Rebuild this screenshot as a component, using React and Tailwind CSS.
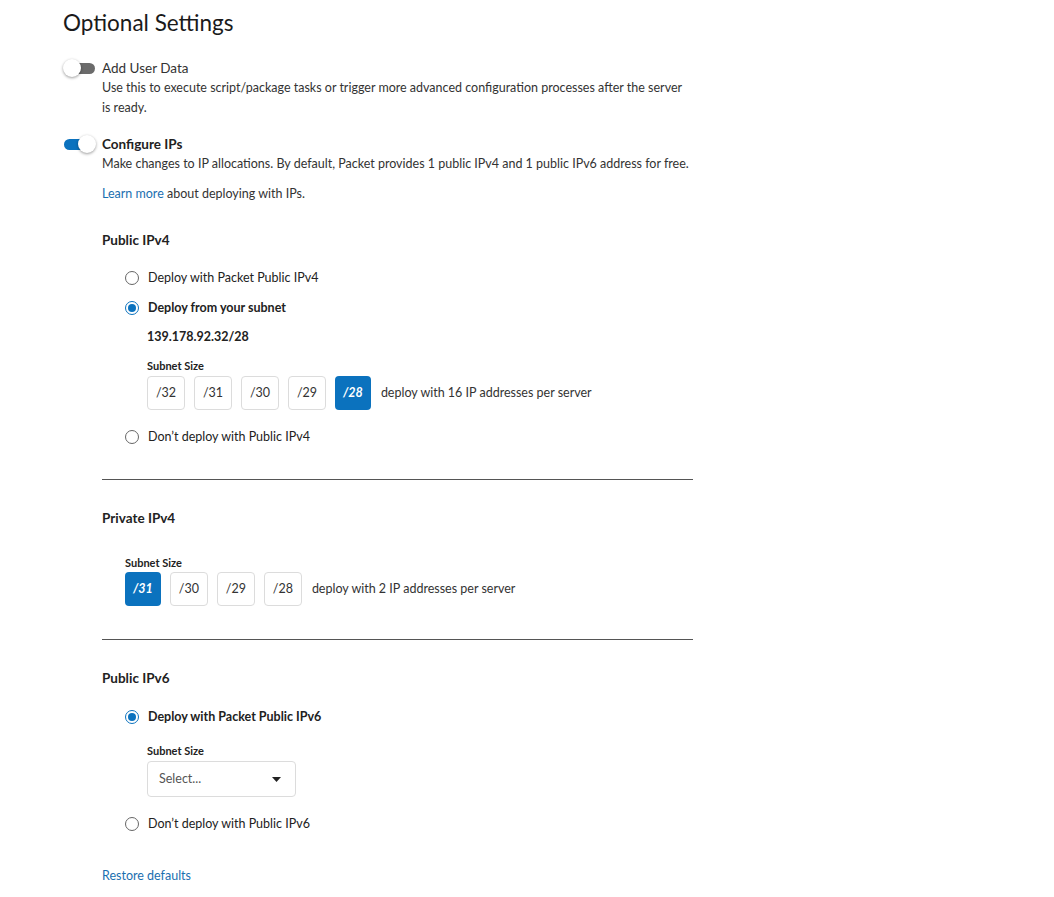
import { useState } from "react";

const BLUE = "bg-[#0b72be]";

function Toggle({ on }) {
  return (
    <div className="relative w-[34px] h-[20px] flex items-center shrink-0">
      <div
        className={`w-[31px] h-[11px] rounded-full ml-[1px] ${on ? "bg-[#0b72be]" : "bg-[#6b6b6b]"}`}
      />
      <div
        className={`absolute top-[1px] w-[18px] h-[18px] rounded-full bg-white shadow-[0_1px_3px_rgba(0,0,0,0.4)] ${on ? "left-[15px]" : "left-0"}`}
      />
    </div>
  );
}

function Radio({ checked, label, bold }) {
  return (
    <div className="flex items-center h-[20px]">
      <div
        className={`w-[14px] h-[14px] rounded-full border flex items-center justify-center bg-white ${checked ? "border-[#0b72be]" : "border-[#666]"}`}
      >
        {checked && <div className="w-[8px] h-[8px] rounded-full bg-[#0b72be]" />}
      </div>
      <span className={`ml-[9px] text-[12.5px] text-[#222] ${bold ? "font-bold" : ""}`}>{label}</span>
    </div>
  );
}

function SizeButtons({ sizes, active, note }) {
  return (
    <div className="flex items-center gap-[9px]">
      {sizes.map((s) => (
        <div
          key={s}
          className={`h-[34px] flex items-center justify-center rounded-[4px] text-[12.5px] ${
            s === active
              ? `${BLUE} px-[8px] text-white font-bold italic`
              : "w-[38px] border border-[#dcdcdc] text-[#333]"
          }`}
        >
          {s}
        </div>
      ))}
      <span className="ml-[1px] text-[12.5px] text-[#333]">{note}</span>
    </div>
  );
}

export default function App() {
  const [userData] = useState(false);
  const [ips] = useState(true);

  return (
    <div className="min-h-[897px] bg-white pl-[63px] pt-[10px] font-['Lato',sans-serif] text-[#222]">
      <h2 className="text-[22.5px] leading-[26px] text-[#1a1a1a]">Optional Settings</h2>

      <div className="mt-[22px] flex items-start">
        <Toggle on={userData} />
        <div className="ml-[5px] w-[592px]">
          <p className="text-[13.5px] leading-[20px] text-[#333]">Add User Data</p>
          <p className="w-[585px] text-[12.5px] leading-[20px] text-[#333]">
            Use this to execute script/package tasks or trigger more advanced configuration processes after the
            server is ready.
          </p>
        </div>
      </div>

      <div className="mt-[16px] flex items-start">
        <Toggle on={ips} />
        <div className="ml-[5px] w-[592px]">
          <p className="text-[13.5px] leading-[20px] font-bold text-[#222]">Configure IPs</p>
          <p className="text-[12.5px] leading-[20px] text-[#333]">
            Make changes to IP allocations. By default, Packet provides 1 public IPv4 and 1 public IPv6 address for
            free.
          </p>
          <p className="mt-[10px] text-[12.5px] leading-[20px] text-[#333]">
            <span className="text-[#1a6fb0]">Learn more</span> about deploying with IPs.
          </p>

          <h3 className="mt-[26px] text-[13.5px] leading-[20px] font-bold">Public IPv4</h3>
          <div className="mt-[18px] pl-[23px] flex flex-col">
            <Radio label="Deploy with Packet Public IPv4" />
            <div className="mt-[10px]">
              <Radio checked bold label="Deploy from your subnet" />
            </div>
            <div className="pl-[22px]">
              <p className="mt-[9px] text-[12.5px] leading-[20px] font-bold">139.178.92.32/28</p>
              <p className="mt-[12px] text-[11px] leading-[14px] font-bold">Subnet Size</p>
              <div className="mt-[3px]">
                <SizeButtons
                  sizes={["/32", "/31", "/30", "/29", "/28"]}
                  active="/28"
                  note="deploy with 16 IP addresses per server"
                />
              </div>
            </div>
            <div className="mt-[17px]">
              <Radio label="Don’t deploy with Public IPv4" />
            </div>
          </div>

          <div className="mt-[32px] border-t border-[#555] w-[591px]" />

          <h3 className="mt-[28px] text-[13.5px] leading-[20px] font-bold">Private IPv4</h3>
          <div className="pl-[23px]">
            <p className="mt-[28px] text-[11px] leading-[14px] font-bold">Subnet Size</p>
            <div className="mt-[2px]">
              <SizeButtons sizes={["/31", "/30", "/29", "/28"]} active="/31" note="deploy with 2 IP addresses per server" />
            </div>
          </div>

          <div className="mt-[33px] border-t border-[#555] w-[591px]" />

          <h3 className="mt-[28px] text-[13.5px] leading-[20px] font-bold">Public IPv6</h3>
          <div className="mt-[19px] pl-[23px] flex flex-col">
            <Radio checked bold label="Deploy with Packet Public IPv6" />
            <div className="pl-[22px]">
              <p className="mt-[17px] text-[11px] leading-[14px] font-bold">Subnet Size</p>
              <div className="mt-[3px] w-[149px] h-[36px] border border-[#dcdcdc] rounded-[4px] flex items-center justify-between pl-[11px] pr-[14px]">
                <span className="text-[12.5px] text-[#555]">Select...</span>
                <svg width="9" height="5" viewBox="0 0 9 5">
                  <path d="M0 0h9L4.5 5z" fill="#222" />
                </svg>
              </div>
            </div>
            <div className="mt-[17px]">
              <Radio label="Don’t deploy with Public IPv6" />
            </div>
          </div>

          <p className="mt-[32px] text-[12.5px] leading-[20px] text-[#1a6fb0]">Restore defaults</p>
        </div>
      </div>
    </div>
  );
}
